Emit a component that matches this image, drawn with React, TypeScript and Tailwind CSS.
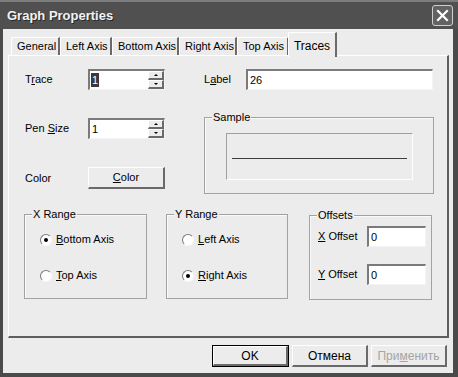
import type { ReactNode } from "react"

const font = "font-['Liberation_Sans',Arial,sans-serif]"

function Sunken({ className = "", children }: { className?: string; children?: ReactNode }) {
  return (
    <div
      className={`border-t-2 border-l-2 border-b border-r border-t-[#7a7a7a] border-l-[#7a7a7a] border-b-[#f4f4f4] border-r-[#f4f4f4] bg-white ${className}`}
    >
      {children}
    </div>
  )
}

function Raised({ className = "", children }: { className?: string; children?: ReactNode }) {
  return (
    <div
      className={`flex items-center justify-center border-t border-l border-b-2 border-r-2 border-t-white border-l-white border-b-[#6a6a6a] border-r-[#6a6a6a] bg-[#ececec] ${className}`}
    >
      {children}
    </div>
  )
}

function SpinInput({ selected = false }: { selected?: boolean }) {
  return (
    <Sunken className="flex h-[21px] w-[77px]">
      <div className="flex flex-1 items-center pl-[1px]">
        {selected ? (
          <span className="bg-[#3a3a3a] px-[1px] leading-[14px] text-white">1</span>
        ) : (
          <span className="px-[1px] leading-[14px]">1</span>
        )}
      </div>
      <div className="flex w-[16px] flex-col">
        <Raised className="h-[9px] w-full border-b border-r">
          <span className="h-0 w-0 border-x-[2px] border-b-[2px] border-x-transparent border-b-black" />
        </Raised>
        <Raised className="h-[9px] w-full border-b border-r">
          <span className="h-0 w-0 border-x-[2px] border-t-[2px] border-x-transparent border-t-black" />
        </Raised>
      </div>
    </Sunken>
  )
}

function Group({ title, className = "", children }: { title: string; className?: string; children?: ReactNode }) {
  return (
    <div className={`relative border border-[#a2a2a2] shadow-[inset_1px_1px_0_#fafafa] ${className}`}>
      <span className="absolute -top-[8px] left-[7px] bg-[#ececec] px-[1px] leading-[14px]">{title}</span>
      {children}
    </div>
  )
}

function Radio({ checked, label }: { checked: boolean; label: ReactNode }) {
  return (
    <div className="flex h-[13px] items-center gap-[4px]">
      <span className="flex h-[12px] w-[12px] items-center justify-center rounded-full border border-t-[#7a7a7a] border-l-[#7a7a7a] border-b-[#f8f8f8] border-r-[#f8f8f8] bg-white">
        {checked && <span className="h-[4px] w-[4px] rounded-full bg-black" />}
      </span>
      <span className="leading-[13px]">{label}</span>
    </div>
  )
}

const tabs = ["General", "Left Axis", "Bottom Axis", "Right Axis", "Top Axis"]
const tabWidths = ["w-[49px]", "w-[52px]", "w-[67px]", "w-[58px]", "w-[52px]"]

export default function App() {
  return (
    <div className={`flex h-[377px] w-[458px] flex-col bg-[#4a4a4a] text-[11px] text-black ${font}`}>
      <div className="flex h-[29px] items-center justify-between border-t-2 border-t-[#7c7c7c] bg-[#505050] pl-[7px] pr-[5px]">
        <span className="text-[13px] font-bold text-[#f2f2f2] [text-shadow:1px_1px_0_#2a2a2a]">Graph Properties</span>
        <div className="flex h-[21px] w-[21px] items-center justify-center rounded-[3px] border border-[#d0d0d0] bg-[#626262]">
          <svg width="13" height="13" viewBox="0 0 13 13">
            <path d="M2 2 L11 11 M11 2 L2 11" stroke="#ffffff" strokeWidth="2.2" strokeLinecap="square" />
          </svg>
        </div>
      </div>

      <div className="flex flex-1 pl-[3px] pr-[5px] pb-[4px]">
        <div className="flex flex-1 flex-col bg-[#ececec] pl-[5px] pr-[4px] pt-[3px]">
          <div className="flex h-[23px] items-end pl-[3px]">
            {tabs.map((t, i) => (
              <div
                key={t}
                className={`flex h-[18px] items-center border-t border-l border-r-2 border-t-white border-l-white border-r-[#6a6a6a] pl-[5px] ${tabWidths[i]}`}
              >
                {t}
              </div>
            ))}
            <div className="relative z-10 -mb-[2px] -ml-[1px] flex h-[25px] w-[49px] items-start justify-center border-t border-l border-r-2 border-t-white border-l-white border-r-[#6a6a6a] bg-[#ececec] pt-[4px] text-[12px]">
              Traces
            </div>
          </div>

          <div className="flex h-[283px] flex-col border-t border-l border-r-2 border-b-2 border-t-white border-l-white border-r-[#5e5e5e] border-b-[#5e5e5e] pl-[15px] pt-[13px]">
            <div className="flex h-[21px] items-center">
              <span className="w-[64px] pl-[1px]">
                T<u>r</u>ace
              </span>
              <SpinInput selected />
              <span className="ml-[39px] w-[42px]">
                L<u>a</u>bel
              </span>
              <Sunken className="flex h-[21px] w-[187px] items-center pl-[2px]">26</Sunken>
            </div>

            <div className="mt-[27px] flex">
              <div className="flex w-[141px] flex-col">
                <div className="mt-[1px] flex h-[21px] items-center">
                  <span className="w-[64px] pl-[1px]">
                    Pen <u>S</u>ize
                  </span>
                  <SpinInput />
                </div>
                <div className="mt-[28px] flex h-[22px] items-center">
                  <span className="w-[64px] pl-[1px]">Color</span>
                  <Raised className="h-[22px] w-[77px]">
                    <span>
                      <u>C</u>olor
                    </span>
                  </Raised>
                </div>
              </div>
              <Group title="Sample" className="ml-[39px] h-[77px] w-[230px]">
                <div className="ml-[21px] mt-[15px] h-[47px] w-[187px] border border-t-[#a0a0a0] border-l-[#a0a0a0] border-b-white border-r-white pl-[5px] pt-[24px]">
                  <div className="h-[1px] w-[175px] bg-[#3c3c3c]" />
                </div>
              </Group>
            </div>

            <div className="mt-[20px] flex items-start">
              <Group title="X Range" className="flex h-[85px] w-[123px] flex-col gap-[23px] pl-[15px] pt-[18px]">
                <Radio checked label={<><u>B</u>ottom Axis</>} />
                <Radio checked={false} label={<><u>T</u>op Axis</>} />
              </Group>
              <Group title="Y Range" className="ml-[19px] flex h-[85px] w-[122px] flex-col gap-[23px] pl-[15px] pt-[18px]">
                <Radio checked={false} label={<><u>L</u>eft Axis</>} />
                <Radio checked label={<><u>R</u>ight Axis</>} />
              </Group>
              <Group title="Offsets" className="ml-[21px] mt-[1px] flex h-[85px] w-[123px] flex-col gap-[17px] pl-[8px] pt-[10px]">
                <div className="flex items-center">
                  <span className="w-[49px]">
                    <u>X</u> Offset
                  </span>
                  <Sunken className="flex h-[21px] w-[59px] items-center pl-[2px]">0</Sunken>
                </div>
                <div className="flex items-center">
                  <span className="w-[49px]">
                    <u>Y</u> Offset
                  </span>
                  <Sunken className="flex h-[21px] w-[59px] items-center pl-[2px]">0</Sunken>
                </div>
              </Group>
            </div>
          </div>

          <div className="mt-[7px] flex justify-end gap-[3px] pr-[2px] text-[12px]">
            <div className="border border-black">
              <Raised className="h-[20px] w-[75px]">OK</Raised>
            </div>
            <Raised className="h-[22px] w-[76px]">Отмена</Raised>
            <Raised className="h-[22px] w-[76px] text-[#a4a4a4]">
              <span>
                При<u>м</u>енить
              </span>
            </Raised>
          </div>
        </div>
      </div>
    </div>
  )
}
